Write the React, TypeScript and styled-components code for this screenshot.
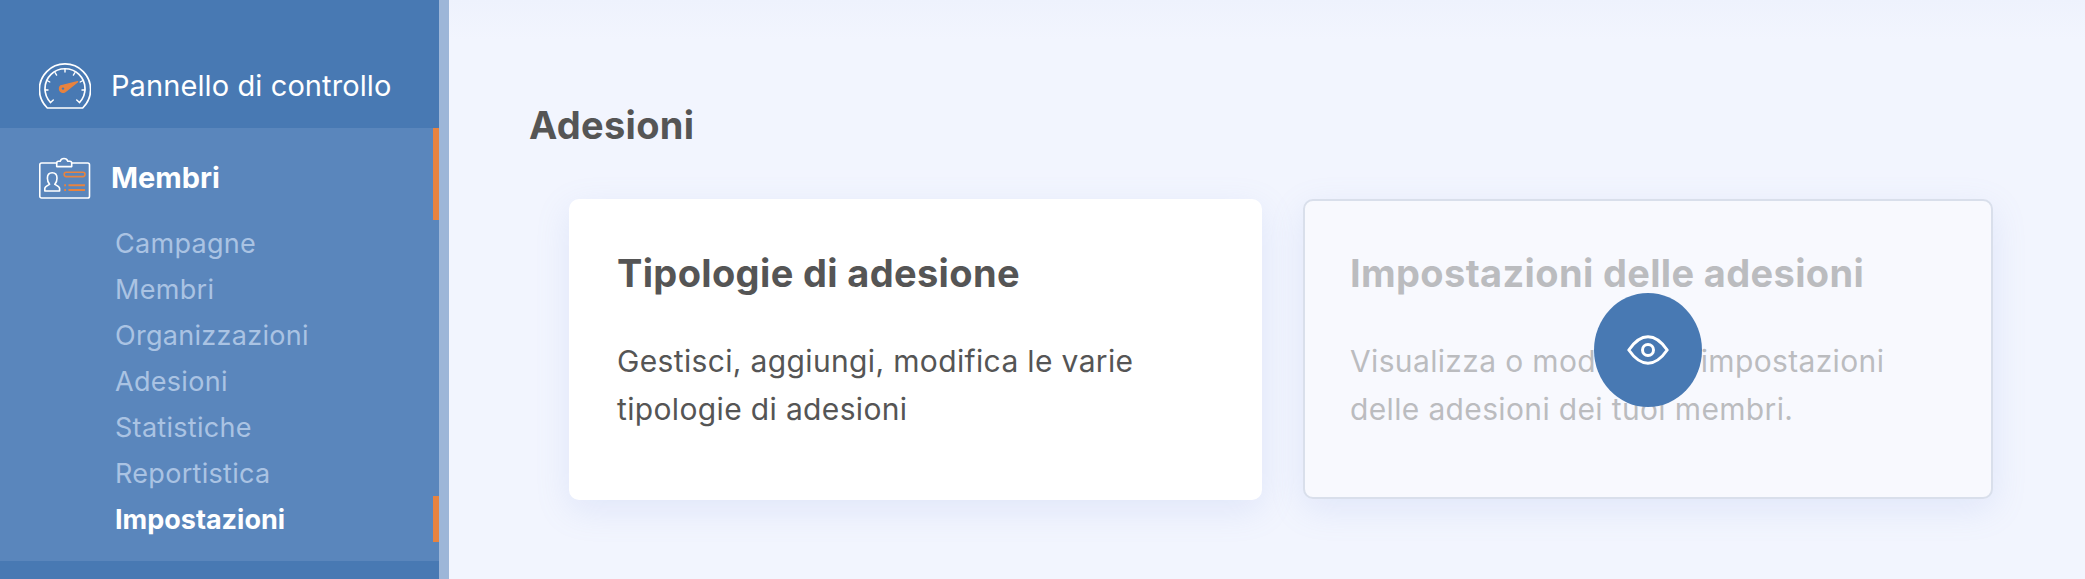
import React from "react";
import styled, { createGlobalStyle } from "styled-components";

const Global = createGlobalStyle`
  html, body { margin: 0; padding: 0; height: 100%; }
  body { font-family: "Inter", "Noto Sans", sans-serif; background: #f2f5fe; overflow: hidden; }
  #root { height: 100%; }
`;

const Page = styled.div`
  display: flex;
  width: 2085px;
  height: 579px;
  overflow: hidden;
`;

const Sidebar = styled.aside`
  flex: 0 0 439px;
  background: #4879b3;
  border-right: 10px solid #9db6d8;
  box-sizing: content-box;
`;

const TopLink = styled.div`
  display: flex;
  align-items: center;
  height: 128px;
  padding: 43px 0 0 39px;
  box-sizing: border-box;
  color: #fff;
  font-size: 29px;
  letter-spacing: 0.1px;
  gap: 20px;
`;

const Section = styled.div`
  background: #5a86bc;
  padding-bottom: 19px;
`;

const SectionHead = styled.div`
  display: flex;
  align-items: center;
  height: 92px;
  padding: 7px 0 0 39px;
  box-sizing: border-box;
  gap: 20px;
  color: #fff;
  font-size: 29px;
  font-weight: 700;
  border-right: 6px solid #e8833f;
`;

const SubList = styled.ul`
  list-style: none;
  margin: 0;
  padding: 0;
`;

const SubItem = styled.li<{ $active?: boolean }>`
  display: flex;
  align-items: center;
  height: 46px;
  padding-left: 115px;
  font-size: 27px;
  letter-spacing: ${(p) => (p.$active ? "0" : "0.3px")};
  font-weight: ${(p) => (p.$active ? 700 : 400)};
  color: ${(p) => (p.$active ? "#fff" : "#aac3e3")};
  border-right: 6px solid ${(p) => (p.$active ? "#e8833f" : "transparent")};
`;

const Main = styled.main`
  flex: 1;
  padding: 100px 88px 0 80px;
  background: linear-gradient(#eef2fd, #f2f5fe 40px);
`;

const Heading = styled.h1`
  margin: 0 0 49px;
  height: 50px;
  line-height: 50px;
  font-size: 38px;
  letter-spacing: 0.3px;
  font-weight: 700;
  color: #555555;
`;

const Cards = styled.div`
  display: grid;
  grid-template-columns: 693px 690px;
  gap: 41px;
  margin-left: 40px;
`;

const Card = styled.section<{ $locked?: boolean }>`
  position: relative;
  height: ${(p) => (p.$locked ? "300px" : "301px")};
  box-sizing: border-box;
  padding: ${(p) => (p.$locked ? "48px 45px" : "50px 48px")};
  border-radius: 10px;
  background: ${(p) => (p.$locked ? "#f8f9fe" : "#fff")};
  border: ${(p) => (p.$locked ? "2px solid #d9dfeb" : "none")};
  box-shadow: 0 10px 34px rgba(130, 155, 225, 0.16);
`;

const Faded = styled.div<{ $locked?: boolean }>`
  opacity: ${(p) => (p.$locked ? 0.37 : 1)};
`;

const CardTitle = styled.h2`
  margin: 0 0 40px;
  height: 48px;
  line-height: 48px;
  font-size: 38px;
  letter-spacing: 0.35px;
  font-weight: 700;
  color: #555555;
`;

const CardText = styled.p`
  margin: 0;
  font-size: 30px;
  letter-spacing: 0.35px;
  line-height: 48px;
  color: #555555;
`;

const EyeButton = styled.div`
  position: absolute;
  left: 289px;
  top: 92px;
  width: 108px;
  height: 114px;
  border-radius: 50%;
  background: #4879b3;
  display: flex;
  align-items: center;
  justify-content: center;
`;

const Gauge = () => (
  <svg width="52" height="46" viewBox="0 0 52 46" fill="none" stroke="#fff" strokeWidth="1.7" strokeLinecap="round" strokeLinejoin="round">
    <path d="M8.3 45 A25.6 25.6 0 1 1 43.7 45 Z" />
    <path d="M11.5 39.5 A20 20 0 1 1 40.5 39.5" />
    <path d="M11.5 39.5l2.8-2.6M40.5 39.5l-2.8-2.6M6 27h3M46 27h-3M8 17.5l2.8 1.5M44 17.5l-2.8 1.5M16 9.5l1.6 2.6M36 9.5l-1.6 2.6M26 6v3" strokeWidth="1.4" />
    <path d="M21.8 22.8 L38.7 18.7 L26.5 28.6 A3.7 3.7 0 1 1 21.8 22.8 Z" fill="#e8833f" stroke="#e8833f" strokeWidth="1.2" />
    <circle cx="24" cy="25.6" r="1.2" fill="#4879b3" stroke="none" />
  </svg>
);

const Badge = () => (
  <svg width="52" height="42" viewBox="0 0 52 42" fill="none" stroke="#fff" strokeWidth="1.6" strokeLinecap="round" strokeLinejoin="round">
    <path d="M17.7 6 H2.6 A1.8 1.8 0 0 0 0.8 7.8 V39.2 A1.8 1.8 0 0 0 2.6 41 H48.7 A1.8 1.8 0 0 0 50.5 39.2 V7.8 A1.8 1.8 0 0 0 48.7 6 H32.7" />
    <path d="M17.7 9.6 V6 A1.8 1.8 0 0 1 19.5 4.2 H21.2 A4 4 0 0 1 28.8 4.2 H30.9 A1.8 1.8 0 0 1 32.7 6 V9.6 Z" />
    <path d="M5.8 34 V31.6 C5.8 29.6 8.2 28.8 10.6 27.4 C9 25.6 8.4 24 8.4 21.2 C8.4 17.6 10.4 15.8 13.2 15.8 C16 15.8 18 17.6 18 21.2 C18 24 17.4 25.6 15.8 27.4 C18.2 28.8 20.6 29.6 20.6 31.6 V34 Z" />
    <rect x="25.2" y="15.2" width="20.8" height="4.4" rx="2" stroke="#e8833f" />
    <path d="M25.2 28.3h1.8M29.5 28.3h16.5M25.2 33h1.8M29.5 33h16.5" stroke="#e8833f" strokeWidth="2" strokeLinecap="butt" />
  </svg>
);

const Eye = () => (
  <svg width="42" height="30" viewBox="0 0 42 30" fill="none" stroke="#fff" strokeWidth="3" strokeLinejoin="round">
    <path d="M1.8 15 C8 6 14 1.8 21 1.8 C28 1.8 34 6 40.2 15 C34 24 28 28.2 21 28.2 C14 28.2 8 24 1.8 15 Z" />
    <circle cx="21" cy="15" r="5.5" />
  </svg>
);

const items = ["Campagne", "Membri", "Organizzazioni", "Adesioni", "Statistiche", "Reportistica"];

export default function App() {
  return (
    <Page>
      <Global />
      <Sidebar>
        <TopLink>
          <Gauge />
          Pannello di controllo
        </TopLink>
        <Section>
          <SectionHead>
            <Badge />
            Membri
          </SectionHead>
          <SubList>
            {items.map((i) => (
              <SubItem key={i}>{i}</SubItem>
            ))}
            <SubItem $active>Impostazioni</SubItem>
          </SubList>
        </Section>
      </Sidebar>
      <Main>
        <Heading>Adesioni</Heading>
        <Cards>
          <Card>
            <CardTitle>Tipologie di adesione</CardTitle>
            <CardText>
              Gestisci, aggiungi, modifica le varie
              <br />
              tipologie di adesioni
            </CardText>
          </Card>
          <Card $locked>
            <Faded $locked>
              <CardTitle>Impostazioni delle adesioni</CardTitle>
              <CardText>
                Visualizza o modifica le impostazioni
                <br />
                delle adesioni dei tuoi membri.
              </CardText>
            </Faded>
            <EyeButton>
              <Eye />
            </EyeButton>
          </Card>
        </Cards>
      </Main>
    </Page>
  );
}
